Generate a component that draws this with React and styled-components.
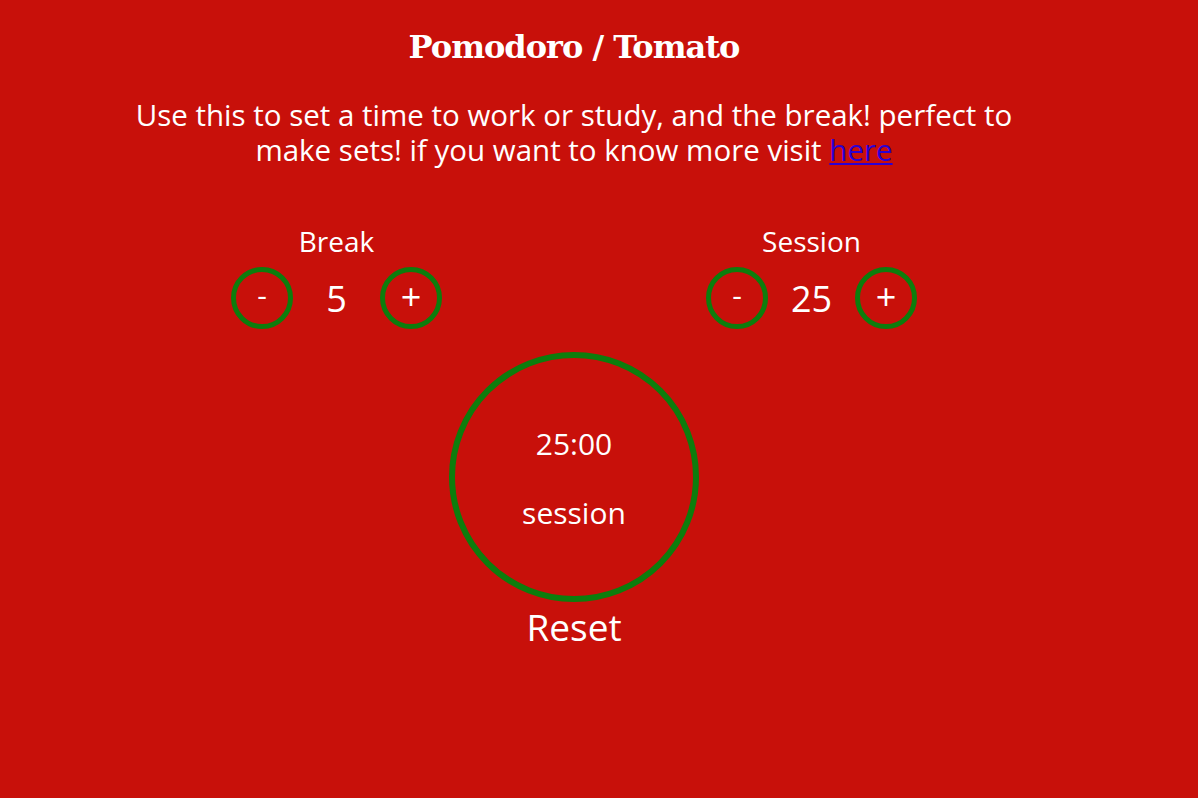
import React, { useState } from "react"
import styled, { createGlobalStyle } from "styled-components"

const GlobalStyle = createGlobalStyle`
  html, body {
    margin: 0;
    padding: 0;
    background-color: #c8100a;
  }
  body {
    color: #fff;
    font-family: "Open Sans", "Noto Sans", sans-serif;
  }
`

const Page = styled.div`
  width: 1148px;
  min-height: 798px;
  display: flex;
  flex-direction: column;
  align-items: center;
  padding-top: 24px;
  box-sizing: border-box;
`

const Title = styled.h1`
  margin: 0;
  font-family: "DejaVu Serif", "Liberation Serif", serif;
  font-weight: bold;
  font-size: 32px;
  line-height: 46px;
  letter-spacing: -1px;
`

const Intro = styled.p`
  margin: 27px 0 0;
  width: 910px;
  text-align: center;
  font-size: 29.5px;
  line-height: 35px;

  a {
    color: #2b00d4;
  }
`

const Settings = styled.div`
  margin-top: 56px;
  width: 950px;
  display: grid;
  grid-template-columns: 1fr 1fr;
`

const Setting = styled.div`
  display: flex;
  flex-direction: column;
  align-items: center;
`

const Label = styled.div`
  font-size: 28px;
  line-height: 36px;
`

const Controls = styled.div`
  display: flex;
  align-items: center;
  margin-top: 8px;
`

const RoundButton = styled.button`
  width: 62px;
  height: 62px;
  border-radius: 50%;
  border: 5px solid #0d7d0d;
  background: transparent;
  color: #fff;
  font-family: inherit;
  font-size: ${(p) => (p.$big ? "36px" : "30px")};
  line-height: 1;
  padding: 0 0 ${(p) => (p.$big ? "2px" : "6px")};
  box-sizing: border-box;
  display: flex;
  align-items: center;
  justify-content: center;
  cursor: pointer;
`

const Value = styled.div`
  width: 87px;
  text-align: center;
  font-size: 36px;
`

const Clock = styled.div`
  margin-top: 23px;
  width: 250px;
  height: 250px;
  box-sizing: border-box;
  border: 6px solid #0d7d0d;
  border-radius: 50%;
  display: flex;
  flex-direction: column;
  align-items: center;
  justify-content: flex-start;
  gap: 29px;
  padding-top: 66px;
`

const ClockText = styled.div`
  font-size: 30px;
  line-height: 40px;
`

const ResetButton = styled.button`
  margin-top: 1px;
  background: transparent;
  border: none;
  color: #fff;
  font-family: inherit;
  font-size: 37px;
  line-height: 48px;
  padding: 0;
  cursor: pointer;
`

const pad = (n) => (n < 10 ? "0" + n : "" + n)

function App() {
  const [breakLen, setBreakLen] = useState(5)
  const [sessionLen, setSessionLen] = useState(25)

  const change = (setter, val, d) => {
    const next = val + d
    if (next < 1 || next > 60) return
    setter(next)
  }

  const reset = () => {
    setBreakLen(5)
    setSessionLen(25)
  }

  return (
    <Page>
      <GlobalStyle />
      <Title>Pomodoro / Tomato</Title>
      <Intro>
        Use this to set a time to work or study, and the break! perfect to make
        sets! if you want to know more visit{" "}
        <a href="#pomodoro">here</a>
      </Intro>
      <Settings>
        <Setting>
          <Label>Break</Label>
          <Controls>
            <RoundButton onClick={() => change(setBreakLen, breakLen, -1)}>-</RoundButton>
            <Value>{breakLen}</Value>
            <RoundButton $big onClick={() => change(setBreakLen, breakLen, 1)}>+</RoundButton>
          </Controls>
        </Setting>
        <Setting>
          <Label>Session</Label>
          <Controls>
            <RoundButton onClick={() => change(setSessionLen, sessionLen, -1)}>-</RoundButton>
            <Value>{sessionLen}</Value>
            <RoundButton $big onClick={() => change(setSessionLen, sessionLen, 1)}>+</RoundButton>
          </Controls>
        </Setting>
      </Settings>
      <Clock>
        <ClockText>{pad(sessionLen)}:00</ClockText>
        <ClockText>session</ClockText>
      </Clock>
      <ResetButton onClick={reset}>Reset</ResetButton>
    </Page>
  )
}

export default App
